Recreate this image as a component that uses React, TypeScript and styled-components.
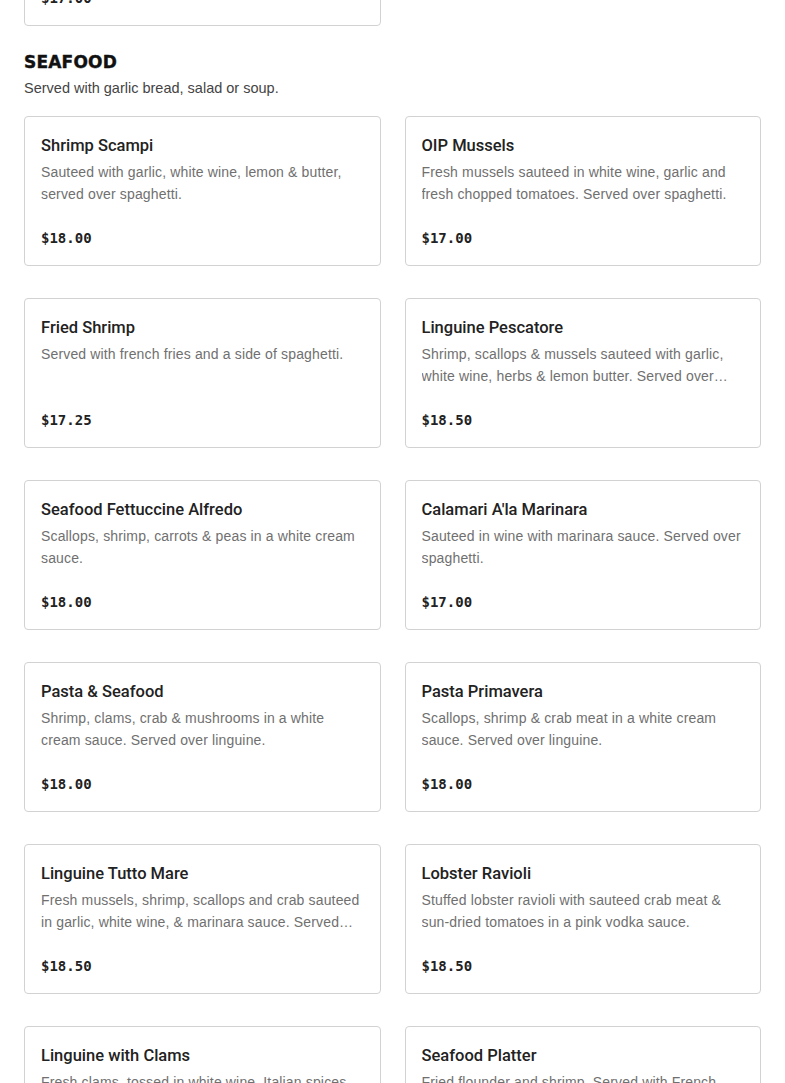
import React from 'react';
import styled, { createGlobalStyle } from 'styled-components';

const GlobalStyle = createGlobalStyle`
  html, body {
    margin: 0;
    padding: 0;
    background: #ffffff;
    overflow: hidden;
  }
  body {
    font-family: 'Liberation Sans', Arial, sans-serif;
    color: #222222;
  }
`;

interface MenuItem {
  name: string;
  description: string;
  price: string;
}

interface MenuSection {
  title: string;
  subtitle?: string;
  items: MenuItem[];
}

const sections: MenuSection[] = [
  {
    title: 'PASTA',
    items: [
      {
        name: 'Baked Ziti',
        description: 'Ziti baked with ricotta, marinara sauce & mozzarella cheese.',
        price: '$17.00',
      },
    ],
  },
  {
    title: 'SEAFOOD',
    subtitle: 'Served with garlic bread, salad or soup.',
    items: [
      {
        name: 'Shrimp Scampi',
        description: 'Sauteed with garlic, white wine, lemon & butter, served over spaghetti.',
        price: '$18.00',
      },
      {
        name: 'OIP Mussels',
        description: 'Fresh mussels sauteed in white wine, garlic and fresh chopped tomatoes. Served over spaghetti.',
        price: '$17.00',
      },
      {
        name: 'Fried Shrimp',
        description: 'Served with french fries and a side of spaghetti.',
        price: '$17.25',
      },
      {
        name: 'Linguine Pescatore',
        description: 'Shrimp, scallops & mussels sauteed with garlic, white wine, herbs & lemon butter. Served over linguine.',
        price: '$18.50',
      },
      {
        name: 'Seafood Fettuccine Alfredo',
        description: 'Scallops, shrimp, carrots & peas in a white cream sauce.',
        price: '$18.00',
      },
      {
        name: "Calamari A'la Marinara",
        description: 'Sauteed in wine with marinara sauce. Served over spaghetti.',
        price: '$17.00',
      },
      {
        name: 'Pasta & Seafood',
        description: 'Shrimp, clams, crab & mushrooms in a white cream sauce. Served over linguine.',
        price: '$18.00',
      },
      {
        name: 'Pasta Primavera',
        description: 'Scallops, shrimp & crab meat in a white cream sauce. Served over linguine.',
        price: '$18.00',
      },
      {
        name: 'Linguine Tutto Mare',
        description: 'Fresh mussels, shrimp, scallops and crab sauteed in garlic, white wine, & marinara sauce. Served over linguine.',
        price: '$18.50',
      },
      {
        name: 'Lobster Ravioli',
        description: 'Stuffed lobster ravioli with sauteed crab meat & sun-dried tomatoes in a pink vodka sauce.',
        price: '$18.50',
      },
      {
        name: 'Linguine with Clams',
        description: 'Fresh clams, tossed in white wine, Italian spices and garlic. Served over linguine.',
        price: '$18.00',
      },
      {
        name: 'Seafood Platter',
        description: 'Fried flounder and shrimp. Served with French fries and cole slaw.',
        price: '$19.00',
      },
    ],
  },
];

// page is shown scrolled down, so the end of the previous section peeks in at the top
const Page = styled.main`
  padding: 0 24px;
  margin-top: -124px;
`;

const Section = styled.section`
  & + & {
    margin-top: 24px;
  }
`;

const SectionTitle = styled.h2`
  margin: 0;
  font-family: 'DejaVu Sans', sans-serif;
  font-size: 17px;
  font-weight: 700;
  line-height: 24px;
  letter-spacing: 0.2px;
  color: #111111;
  -webkit-text-stroke: 0.4px #111111;
`;

const SectionSubtitle = styled.p`
  margin: 4px 0 0;
  font-size: 14.5px;
  line-height: 20px;
  color: #444444;
`;

const Grid = styled.div<{ $spaced: boolean }>`
  display: grid;
  grid-template-columns: 1fr 1fr;
  column-gap: 24px;
  row-gap: 32px;
  margin-top: ${(p) => (p.$spaced ? '18px' : '0')};
`;

const Card = styled.article`
  border: 1px solid #d2d2d2;
  border-radius: 4px;
  padding: 16px 16px 17px;
  display: flex;
  flex-direction: column;
  background: #ffffff;
`;

const ItemName = styled.h3`
  margin: 1px 0 0;
  font-family: Roboto, 'Liberation Sans', sans-serif;
  font-size: 16.5px;
  font-weight: 500;
  line-height: 24px;
  color: #222222;
`;

const ItemDescription = styled.p`
  margin: 3px 0 0;
  height: 44px;
  font-size: 14px;
  line-height: 22px;
  letter-spacing: 0.15px;
  color: #707070;
  display: -webkit-box;
  -webkit-line-clamp: 2;
  -webkit-box-orient: vertical;
  overflow: hidden;
`;

const ItemPrice = styled.span`
  margin-top: 23px;
  font-family: 'DejaVu Sans Mono', 'Liberation Mono', monospace;
  font-size: 14px;
  font-weight: 700;
  line-height: 20px;
  color: #222222;
`;

const MenuCard: React.FC<{ item: MenuItem }> = ({ item }) => (
  <Card>
    <ItemName>{item.name}</ItemName>
    <ItemDescription>{item.description}</ItemDescription>
    <ItemPrice>{item.price}</ItemPrice>
  </Card>
);

const App: React.FC = () => (
  <>
    <GlobalStyle />
    <Page>
      {sections.map((section) => (
        <Section key={section.title}>
          {section.title !== 'PASTA' && (
            <>
              <SectionTitle>{section.title}</SectionTitle>
              {section.subtitle && <SectionSubtitle>{section.subtitle}</SectionSubtitle>}
            </>
          )}
          <Grid $spaced={section.title !== 'PASTA'}>
            {section.items.map((item) => (
              <MenuCard key={item.name} item={item} />
            ))}
          </Grid>
        </Section>
      ))}
    </Page>
  </>
);

export default App;
